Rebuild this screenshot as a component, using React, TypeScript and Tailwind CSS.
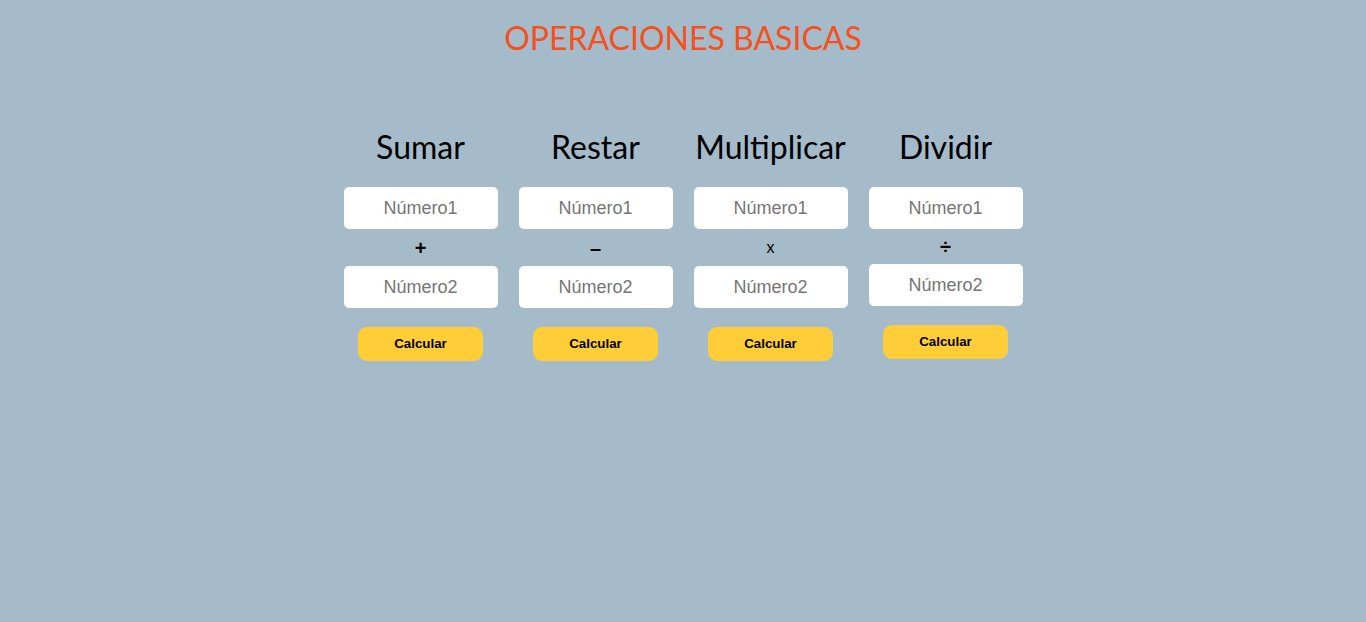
const ops = [
  { title: "Sumar", sign: "+", signClass: "font-bold text-[20px] h-[37px]" },
  { title: "Restar", sign: "–", signClass: "font-bold text-[20px] h-[37px]" },
  { title: "Multiplicar", sign: "x", signClass: "text-[16px] h-[37px]" },
  { title: "Dividir", sign: "÷", signClass: "font-bold text-[20px] h-[35px]" },
];

function OperationCard({ title, sign, signClass }: { title: string; sign: string; signClass: string }) {
  return (
    <div className="flex w-[175px] flex-col items-center">
      <h2 className="font-['Lato',sans-serif] text-[32px] leading-[38px] text-black">{title}</h2>
      <input
        className="mt-[21px] h-[42px] w-[154px] rounded-[5px] bg-white text-center font-['Liberation_Sans',Arial,sans-serif] text-[18px] outline-none placeholder:text-[#757575]"
        placeholder="Número1"
      />
      <div className={`flex items-center justify-center font-['Liberation_Sans',Arial,sans-serif] text-black ${signClass}`}>
        {sign}
      </div>
      <input
        className="h-[42px] w-[154px] rounded-[5px] bg-white text-center font-['Liberation_Sans',Arial,sans-serif] text-[18px] outline-none placeholder:text-[#757575]"
        placeholder="Número2"
      />
      <button className="mt-[19px] h-[34px] w-[125px] rounded-[9px] bg-[#ffcd38] font-['Liberation_Sans',Arial,sans-serif] text-[13.33px] font-bold text-black">
        Calcular
      </button>
    </div>
  );
}

export default function App() {
  return (
    <div className="min-h-[622px] w-full bg-[#a5bbc9] pt-[19px]">
      <h1 className="text-center font-['Lato',sans-serif] text-[32px] leading-[38px] text-[#f4511e]">
        OPERACIONES BASICAS
      </h1>
      <div className="mt-[71px] flex justify-center">
        {ops.map((op) => (
          <OperationCard key={op.title} {...op} />
        ))}
      </div>
    </div>
  );
}
